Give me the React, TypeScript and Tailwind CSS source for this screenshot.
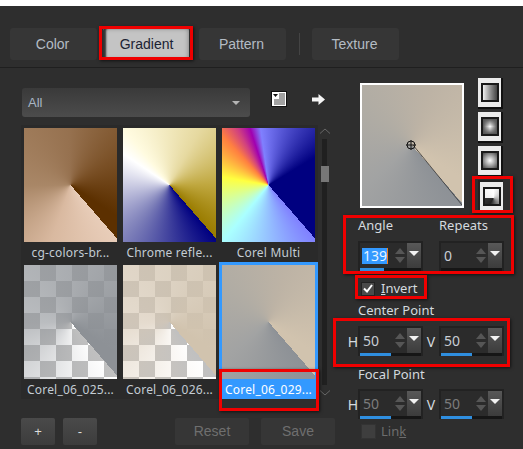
import React from "react";

const sans = "font-['Liberation_Sans',Arial,sans-serif]";
const ui = "font-['Noto_Sans',sans-serif]";

function Tab({ label, active, w = "w-[87px]" }: { label: string; active?: boolean; w?: string }) {
  return (
    <div
      className={`${w} h-[32px] rounded-[3px] flex items-center justify-center text-[14px] ${sans} ${
        active
          ? "pl-[1px] bg-[#c4c4c4] text-[#1b2233] shadow-[inset_3px_0_2px_#333,inset_0_0_5px_#777]"
          : "pr-[2px] bg-[#363636] text-[#b4bcc4]"
      }`}
    >
      {label}
    </div>
  );
}

function Thumb({ name, bg, selected }: { name: string; bg: string; selected?: boolean }) {
  return (
    <div className={`w-[99px] h-[137px] border-[3px] flex flex-col ${selected ? "border-[#3399ff] border-b-0" : "border-transparent border-b-0"}`}>
      <div className={`w-[93px] h-[114px] shrink-0 ${bg}`} />
      <div
        className={`h-[20px] w-[93px] pt-[2px] flex items-center justify-center text-[12px] leading-none whitespace-nowrap tracking-[0.2px] ${ui} ${
          selected ? "bg-[#3399ff] text-white" : "text-[#c3ccd4]"
        }`}
      >
        {name}
      </div>
    </div>
  );
}

function TypeButton({ inner, pressed }: { inner: string; pressed?: boolean }) {
  return (
    <div
      className={`w-[25px] h-[31px] bg-[#ececec] flex items-center justify-center ${
        pressed ? "border-l-2 border-t-2 border-[#222]" : "border-r-2 border-b-2 border-[#111]"
      }`}
    >
      <div className={`w-[18px] h-[19px] border-2 border-[#1a1a1a] ${inner}`} />
    </div>
  );
}

function Spinner({ value, pct, dim, selected }: { value: string; pct: string; dim?: boolean; selected?: boolean }) {
  return (
    <div className="w-[65px] h-[30px] bg-[#2b2b2b] border-2 border-[#222] border-b-0 flex flex-col">
      <div className="flex flex-1 min-h-0">
        <div className={`w-[34px] flex items-center pl-[3px] text-[14px] ${ui} ${dim ? "text-[#7c7c7c]" : "text-[#c8ced4]"}`}>
          <span className={selected ? "bg-[#3399ff] text-[#e8f4ff] border-r border-[#f08020] leading-[16px] -ml-[1px] pl-[1px]" : ""}>{value}</span>
        </div>
        <div className="w-[11px] flex flex-col items-center justify-center gap-[3px]">
          <svg width="10" height="6" viewBox="0 0 10 6"><path d="M5 0 10 6H0z" fill="#565656" /></svg>
          <svg width="10" height="6" viewBox="0 0 10 6"><path d="M0 0H10L5 6z" fill="#565656" /></svg>
        </div>
        <div className="w-[14px] ml-auto bg-gradient-to-b from-[#585858] to-[#3c3c3c] flex justify-center pt-[8px]">
          <svg width="10" height="5" viewBox="0 0 10 5"><path d="M0 0H10L5 5z" fill="#f2f2f2" /></svg>
        </div>
      </div>
      <div className="h-[3px] bg-[#161616] shrink-0">
        <div className="h-full bg-[#2f8fe0]" style={{ width: pct }} />
      </div>
    </div>
  );
}

function RedBox({ c }: { c: string }) {
  return <div className={`absolute border-[3px] border-[#f00000] shadow-[1px_1px_3px_rgba(0,0,0,0.6)] pointer-events-none ${c}`} />;
}

export default function App() {
  return (
    <div className="relative w-[523px] h-[449px] overflow-hidden bg-[#2e2e2e]">
      <div className="h-[6px] bg-white" />
      <div className="h-[62px] border-b border-[#1f1f1f] pl-[10px] pt-[22px] flex items-start">
        <Tab label="Color" />
        <div className="ml-[6px]"><Tab label="Gradient" w="w-[86px]" active /></div>
        <div className="ml-[10px]"><Tab label="Pattern" /></div>
        <div className="w-px h-[22px] bg-[#444] ml-[13px] mr-[12px] mt-[5px]" />
        <Tab label="Texture" />
      </div>

      <div className="flex">
        <div className="w-[343px] pl-[21px] pt-[20px] shrink-0">
          <div className="flex items-center h-[29px]">
            <div className={`ml-[1px] w-[228px] h-[29px] rounded-[3px] bg-gradient-to-b from-[#3a3a3a] to-[#4c4c4c] flex items-center px-[6px] text-[13px] text-[#a9b6c4] ${sans}`}>
              All
              <svg className="ml-auto mr-[4px]" width="8" height="4" viewBox="0 0 8 4"><path d="M0 0H8L4 4z" fill="#b5b5b5" /></svg>
            </div>
            <svg className="ml-[21px] -mt-[7px]" width="16" height="16" viewBox="0 0 16 16">
              <rect x="0.5" y="0.5" width="15" height="15" fill="#fff" stroke="#111" />
              <path d="M2 3H7L4.5 6z" fill="#111" />
              <path d="M8 3h6M8 5h6M8 7h6M3 9h11M3 11h11M3 13h11" stroke="#444" strokeWidth="1" />
            </svg>
            <svg className="ml-[25px] -mt-[7px]" width="13" height="13" viewBox="0 0 13 13">
              <path d="M0 4.5H6.5V1L13 6.5 6.5 12V8.5H0z" fill="#f5f5f5" />
            </svg>
          </div>

          <div className="flex mt-[8px]">
            <div className="grid grid-cols-[99px_99px_99px] bg-[#2a2a2a]">
              <Thumb name="cg-colors-br..." bg="bg-[conic-gradient(from_139deg,#e8cdb9,#d9b9a0_60deg,#a98767_130deg,#96714f_220deg,#7a5026_280deg,#5c3000_345deg,#5c3000)]" />
              <Thumb name="Chrome refle..." bg="bg-[conic-gradient(from_139deg,#000080,#7d7fb9_80deg,#ffffff_165deg,#fffbe0_182deg,#e6d9a0_250deg,#c0a840_310deg,#9a7c00)]" />
              <Thumb name="Corel Multi" bg="bg-[conic-gradient(from_139deg,#8080ff,#aaffff_80deg,#ffff40_141deg,#ff8040_178deg,#d04080_192deg,#a000b0_203deg,#8080ff_213deg,#000080_280deg,#000080)]" />
              <Thumb
                name="Corel_06_025..."
                bg="bg-[conic-gradient(from_139deg,rgba(141,145,150,0),rgba(141,145,150,0.15)_40deg,rgba(141,145,150,0.6)_130deg,rgba(141,145,150,0.75)_220deg,#8d9196_345deg),repeating-conic-gradient(#c0c0c0_0_25%,#ffffff_0_50%)] bg-[length:100%_100%,32px_32px]"
              />
              <Thumb
                name="Corel_06_026..."
                bg="bg-[conic-gradient(from_139deg,rgba(141,145,150,0),rgba(225,210,190,0.2)_40deg,rgba(215,200,180,0.65)_130deg,rgba(209,195,174,0.75)_220deg,#d1c3ae_345deg),repeating-conic-gradient(#c0c0c0_0_25%,#ffffff_0_50%)] bg-[length:100%_100%,32px_32px]"
              />
              <Thumb
                selected
                name="Corel_06_029..."
                bg="bg-[conic-gradient(from_139deg,#8d9196,#a2a3a3_90deg,#b0aca4_170deg,#bdb3a5_240deg,#d1c3ae_345deg,#d1c3ae)]"
              />
            </div>
            <div className="w-[9px] ml-[2px] flex flex-col items-center pt-[3px]">
              <svg width="10" height="6" viewBox="0 0 10 6"><path d="M0 5.5 5 1l5 4.5" fill="none" stroke="#666" /></svg>
              <div className="relative w-[5px] h-[246px] bg-[#202020] mt-[5px]">
                <div className="absolute left-[-1px] top-[27px] w-[8px] h-[16px] bg-[#777]" />
              </div>
              <svg className="mt-[5px]" width="10" height="6" viewBox="0 0 10 6"><path d="M0 .5 5 5l5-4.5" fill="none" stroke="#666" /></svg>
            </div>
          </div>

          <div className={`flex mt-[19px] text-[13px] ${sans}`}>
            <div className="w-[34px] h-[27px] rounded-[2px] bg-gradient-to-b from-[#4a4a4a] to-[#3c3c3c] text-[#ddd] flex items-center justify-center">+</div>
            <div className="w-[34px] h-[27px] ml-[8px] rounded-[2px] bg-gradient-to-b from-[#4a4a4a] to-[#3c3c3c] text-[#ddd] flex items-center justify-center">-</div>
            <div className="w-[74px] h-[27px] ml-[78px] rounded-[2px] bg-[#363636] text-[#6f6f6f] text-[14px] flex items-center justify-center">Reset</div>
            <div className="w-[74px] h-[27px] ml-[12px] rounded-[2px] bg-[#363636] text-[#6f6f6f] text-[14px] flex items-center justify-center">Save</div>
          </div>
        </div>

        <div className={`flex-1 ${ui} text-[13px] text-[#d4dadf]`}>
          <div className="flex pt-[10px]">
            <div className="relative ml-[17px] mt-[5px] w-[104px] h-[125px] border-2 border-white bg-[conic-gradient(from_139deg,#8d9196,#a2a3a3_90deg,#b0aca4_170deg,#bdb3a5_240deg,#d1c3ae_345deg,#d1c3ae)]">
              <svg className="absolute left-0 top-0" width="100" height="121" viewBox="0 0 100 121">
                <path d="M51 60 100 120" stroke="#333" strokeWidth="0.8" />
                <circle cx="49" cy="60" r="4" fill="none" stroke="#111" />
                <path d="M49 55V65M44 60H54" stroke="#111" />
              </svg>
            </div>
            <div className="ml-[14px] flex flex-col gap-[3px]">
              <TypeButton inner="bg-gradient-to-r from-[#f0f0f0] to-[#444]" />
              <TypeButton inner="bg-[linear-gradient(to_right,#555,transparent_50%,#555),linear-gradient(to_bottom,#555,#fff_50%,#555)]" />
              <TypeButton inner="bg-[radial-gradient(circle,#fff,#444)]" />
              <TypeButton pressed inner="bg-[conic-gradient(from_90deg_at_60%_60%,#bbb,#777_60deg,#222_120deg,#333_178deg,#eee_182deg,#fff_270deg,#bbb)]" />
            </div>
          </div>

          <div className="flex pl-[15px] mt-[6px] h-[18px] items-center">
            <span className="w-[81px]">Angle</span>
            <span>Repeats</span>
          </div>
          <div className="flex pl-[15px] mt-[6px] gap-[16px]">
            <Spinner value="139" pct="24px" selected />
            <Spinner value="0" pct="0px" />
          </div>
          <div className="flex items-center pl-[18px] mt-[10px] h-[15px]">
            <div className="w-[14px] h-[14px] bg-[#4a4a4a] border border-[#222] flex items-center justify-center">
              <svg width="10" height="9" viewBox="0 0 10 9"><path d="M1 4.5 4 7.5 9 1" fill="none" stroke="#fff" strokeWidth="2" /></svg>
            </div>
            <span className="ml-[6px]"><span className="underline">I</span>nvert</span>
          </div>
          <div className="pl-[15px] mt-[7px] h-[16px] flex items-center">Center Point</div>
          <div className="flex mt-[7px] items-center">
            <span className="w-[15px] text-right text-[14px]">H</span>
            <div className="flex items-center">
              <Spinner value="50" pct="31px" />
              <span className="w-[16px] text-center text-[14px]">V</span>
              <Spinner value="50" pct="31px" />
            </div>
          </div>
          <div className="pl-[15px] mt-[11px] h-[16px] flex items-center">Focal Point</div>
          <div className="flex mt-[6px] items-center">
            <span className="w-[15px] text-right text-[14px]">H</span>
            <div className="flex items-center">
              <Spinner value="50" pct="31px" dim />
              <span className="w-[16px] text-center text-[14px]">V</span>
              <Spinner value="50" pct="31px" dim />
            </div>
          </div>
          <div className="flex items-center pl-[18px] mt-[5px] h-[15px] text-[#6d6d6d]">
            <div className="w-[15px] h-[15px] bg-[#3e3e3e] border border-[#333]" />
            <span className="ml-[5px]">Lin<span className="underline">k</span></span>
          </div>
        </div>
      </div>

      <RedBox c="left-[99px] top-[26px] w-[94px] h-[34px]" />
      <RedBox c="left-[472px] top-[176px] w-[41px] h-[37px]" />
      <RedBox c="left-[343px] top-[215px] w-[171px] h-[59px]" />
      <RedBox c="left-[355px] top-[275px] w-[72px] h-[24px]" />
      <RedBox c="left-[333px] top-[318px] w-[177px] h-[49px]" />
      <RedBox c="left-[219px] top-[369px] w-[100px] h-[42px]" />
    </div>
  );
}
